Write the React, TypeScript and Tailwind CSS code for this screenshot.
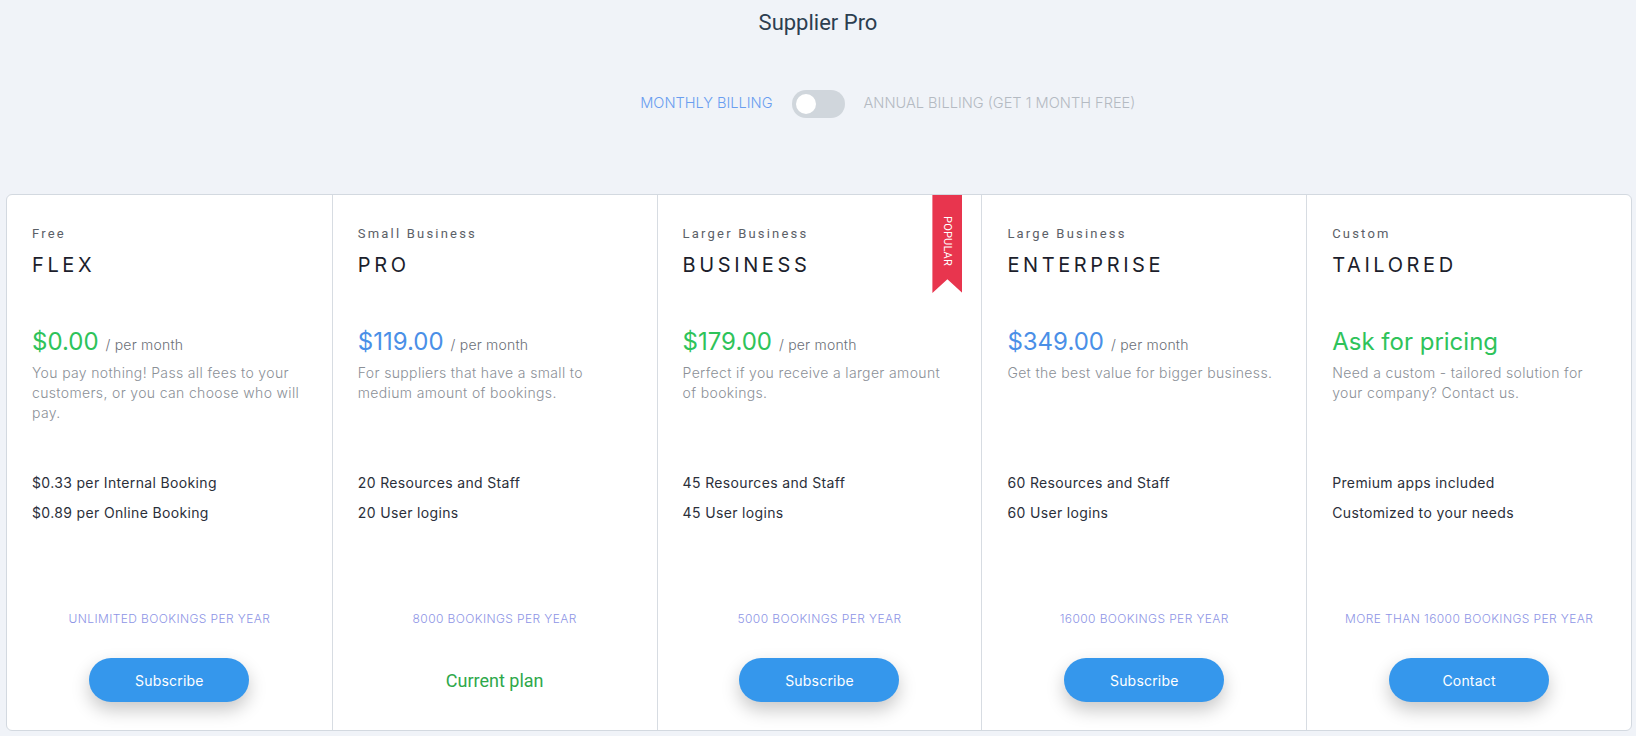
import React from 'react'

interface Plan {
  label: string
  name: string
  price: string
  priceColor: string
  perMonth: boolean
  description: string
  features: string[]
  bookings: string
  action: 'subscribe' | 'current' | 'contact'
  popular?: boolean
}

const plans: Plan[] = [
  {
    label: 'Free',
    name: 'FLEX',
    price: '$0.00',
    priceColor: 'text-[#2ec35a]',
    perMonth: true,
    description: 'You pay nothing! Pass all fees to your customers, or you can choose who will pay.',
    features: ['$0.33 per Internal Booking', '$0.89 per Online Booking'],
    bookings: 'Unlimited bookings per year',
    action: 'subscribe',
  },
  {
    label: 'Small Business',
    name: 'PRO',
    price: '$119.00',
    priceColor: 'text-[#4a8fe7]',
    perMonth: true,
    description: 'For suppliers that have a small to medium amount of bookings.',
    features: ['20 Resources and Staff', '20 User logins'],
    bookings: '8000 bookings per year',
    action: 'current',
  },
  {
    label: 'Larger Business',
    name: 'BUSINESS',
    price: '$179.00',
    priceColor: 'text-[#2ec35a]',
    perMonth: true,
    description: 'Perfect if you receive a larger amount of bookings.',
    features: ['45 Resources and Staff', '45 User logins'],
    bookings: '5000 bookings per year',
    action: 'subscribe',
    popular: true,
  },
  {
    label: 'Large Business',
    name: 'ENTERPRISE',
    price: '$349.00',
    priceColor: 'text-[#4a8fe7]',
    perMonth: true,
    description: 'Get the best value for bigger business.',
    features: ['60 Resources and Staff', '60 User logins'],
    bookings: '16000 bookings per year',
    action: 'subscribe',
  },
  {
    label: 'Custom',
    name: 'TAILORED',
    price: 'Ask for pricing',
    priceColor: 'text-[#2ec35a]',
    perMonth: false,
    description: 'Need a custom - tailored solution for your company? Contact us.',
    features: ['Premium apps included', 'Customized to your needs'],
    bookings: 'More than 16000 bookings per year',
    action: 'contact',
  },
]

const PlanColumn: React.FC<{ plan: Plan; first: boolean }> = ({ plan, first }) => {
  return (
    <div
      className={`relative flex flex-col px-[25px] pt-[31px] pb-[28px] ${first ? '' : 'border-l border-[#d7dce2]'}`}
    >
      {/* Popular ribbon */}
      {plan.popular && (
        <div className="absolute top-0 right-[19px] w-[30px] h-[98px] bg-[#e8354e] [clip-path:polygon(0_0,100%_0,100%_100%,50%_86%,0_100%)] flex justify-center pt-[21px]">
          <span className="[writing-mode:vertical-rl] text-[11px] leading-none text-white font-['Roboto',sans-serif] tracking-[0.2px]">
            POPULAR
          </span>
        </div>
      )}

      <div className="text-[13px] leading-4 tracking-[2.2px] text-[#5b6067] font-['Roboto',sans-serif]">
        {plan.label}
      </div>
      <div className="mt-[9px] text-[20px] leading-7 tracking-[3.6px] text-[#1c1e2c]">{plan.name}</div>

      <div className="mt-[47px] h-8 flex items-baseline">
        <span className={`text-[24px] leading-8 ${plan.priceColor}`}>{plan.price}</span>
        {plan.perMonth && (
          <span className="ml-[7px] text-[14px] tracking-[0.2px] text-[#6b7078] font-light">/ per month</span>
        )}
      </div>

      <p className="mt-[5px] h-[110px] text-[14px] leading-5 tracking-[0.35px] text-[#8b9097] font-light">
        {plan.description}
      </p>

      <div className="flex flex-col gap-[10px]">
        {plan.features.map((f) => (
          <div key={f} className="text-[14px] leading-5 tracking-[0.35px] text-[#2b2f3a]">
            {f}
          </div>
        ))}
      </div>

      <div className="mt-auto text-center text-[12px] leading-4 tracking-[0.4px] uppercase text-[#8e95e6] font-light">
        {plan.bookings}
      </div>

      <div className="mt-[31px] h-[44px] flex justify-center items-center">
        {plan.action === 'current' ? (
          <span className="text-[18px] text-[#2ea84b] font-['Roboto',sans-serif]">Current plan</span>
        ) : (
          <button className="w-[160px] h-[44px] rounded-full bg-[#3597ec] text-white text-[14px] tracking-[0.2px] shadow-[0_8px_18px_rgba(0,0,0,0.22)]">
            {plan.action === 'contact' ? 'Contact' : 'Subscribe'}
          </button>
        )}
      </div>
    </div>
  )
}

const App: React.FC = () => {
  return (
    <div className="min-h-screen bg-[#f0f3f8] pt-[7px] font-['Inter',sans-serif]">
      <h1 className="text-center text-[22px] leading-8 text-[#2c3e50] font-['Roboto',sans-serif]">Supplier Pro</h1>

      {/* Billing toggle */}
      <div className="mt-[51px] grid grid-cols-[1fr_auto_1fr] items-center gap-[19px]">
        <span className="justify-self-end text-[14.6px] font-light text-[#6a9ef0]">MONTHLY BILLING</span>
        <div className="w-[53px] h-[28px] rounded-full bg-[#d0d6dc] flex items-center px-[4px]">
          <div className="w-[20px] h-[20px] rounded-full bg-white" />
        </div>
        <span className="justify-self-start text-[14.6px] font-light text-[#b4bac2]">
          ANNUAL BILLING (GET 1 MONTH FREE)
        </span>
      </div>

      {/* Plans */}
      <div className="mt-[76px] ml-[6px] mr-[4px] h-[537px] bg-white border border-[#d3d9e0] rounded-[6px] grid grid-cols-5">
        {plans.map((p, i) => (
          <PlanColumn key={p.name} plan={p} first={i === 0} />
        ))}
      </div>
    </div>
  )
}

export default App
